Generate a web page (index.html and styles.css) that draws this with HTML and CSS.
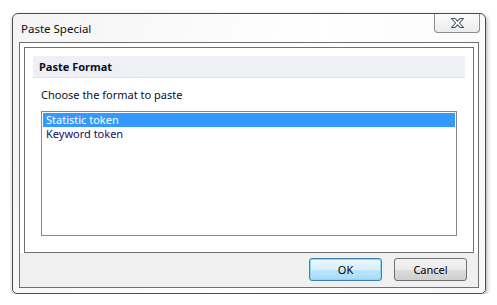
FILE: index.html
```html
<!DOCTYPE html>
<html lang="en">
<head>
    <meta charset="UTF-8">
    <title>Paste Special</title>
    <link rel="stylesheet" href="styles.css">
</head>
<body>
    <div class="window">
        <div class="titlebar">
            <span class="title">Paste Special</span>
            <button class="close-btn" aria-label="Close">
                <svg width="15" height="12" viewBox="0 0 15 12">
                    <path d="M1.5 1.5 H5 L7.5 4.2 L10 1.5 H13.5 L9.4 6 L13.5 10.5 H10 L7.5 7.8 L5 10.5 H1.5 L5.6 6 Z" fill="#fff" stroke="#47505c" stroke-width="1.1" stroke-linejoin="round"/>
                </svg>
            </button>
        </div>
        <div class="client">
            <div class="main">
                <div class="group">
                    <div class="group-head">Paste Format</div>
                    <p class="hint">Choose the format to paste</p>
                    <ul class="listbox">
                        <li class="selected">Statistic token</li>
                        <li>Keyword token</li>
                    </ul>
                </div>
            </div>
            <div class="footer">
                <button class="btn btn-default">OK</button>
                <button class="btn">Cancel</button>
            </div>
        </div>
    </div>
</body>
</html>
```

FILE: styles.css
```css
body {
    margin: 0;
    background: #fff;
    font-family: 'Noto Sans', 'Open Sans', sans-serif;
    font-size: 11px;
    color: #000;
}
.window {
    margin: 13px 0 0 12px;
    width: 460px;
    height: 274px;
    border: 1px solid #4d4d4d;
    border-radius: 6px 6px 5px 5px;
    background: linear-gradient(110deg, #f4f4f4 0%, #fbfbfb 35%, #fff 55%, #f8f8f8 100%);
    box-shadow: 1px 2px 4px rgba(0, 0, 0, 0.35);
    padding: 0 6px 5px 6px;
    display: flex;
    flex-direction: column;
}
.titlebar {
    height: 28px;
    display: flex;
    justify-content: space-between;
    align-items: flex-start;
}
.title {
    margin: 8px 0 0 2px;
    line-height: 14px;
    font-size: 11.5px;
    color: #111;
}
.close-btn {
    width: 46px;
    height: 19px;
    margin-right: -1px;
    border: 1px solid #8c8c8c;
    border-top: none;
    border-radius: 0 0 4px 4px;
    background: linear-gradient(#fbfbfb, #ececec);
    padding: 0;
    display: flex;
    align-items: center;
    justify-content: center;
}
.client {
    flex: 1;
    border: 1px solid #6f6f6f;
    display: flex;
    flex-direction: column;
    background: #fff;
}
.main {
    padding: 4px 4px 0 4px;
}
.group {
    height: 196px;
    border: 1px solid #6f6f6f;
    padding: 8px 8px 0 8px;
}
.group-head {
    height: 21px;
    line-height: 21px;
    background: #eff0f5;
    border-bottom: 1px solid #e1e2e6;
    padding-left: 6px;
    font-weight: bold;
    color: #0a0f2a;
}
.hint {
    margin: 9px 0 0 8px;
    line-height: 16px;
    color: #0a0f2a;
}
.listbox {
    list-style: none;
    margin: 8px 8px 0 8px;
    padding: 1px;
    height: 121px;
    border: 1px solid #828790;
}
.listbox li {
    height: 14px;
    line-height: 14px;
    padding-left: 3px;
    color: #1a0b5e;
}
.listbox li.selected {
    background: #3399ff;
    color: #fff;
}
.footer {
    flex: 1;
    background: #f0f0f0;
    display: flex;
    justify-content: flex-end;
    align-items: flex-start;
    gap: 12px;
    padding: 5px 11px 0 0;
}
.btn {
    width: 73px;
    height: 23px;
    border: 1px solid #707070;
    border-radius: 3px;
    background: linear-gradient(#f2f2f2 0%, #ebebeb 50%, #dddddd 51%, #cfcfcf 100%);
    font-family: 'Noto Sans', 'Open Sans', sans-serif;
    font-size: 11px;
    color: #000;
    padding: 0;
}
.btn-default {
    border-color: #3c7fb1;
    box-shadow: inset 0 0 0 1px #8fd5f5;
    background: linear-gradient(#eaf6fd 0%, #d9f0fc 50%, #bee6fd 51%, #a7d9f5 100%);
}
```
